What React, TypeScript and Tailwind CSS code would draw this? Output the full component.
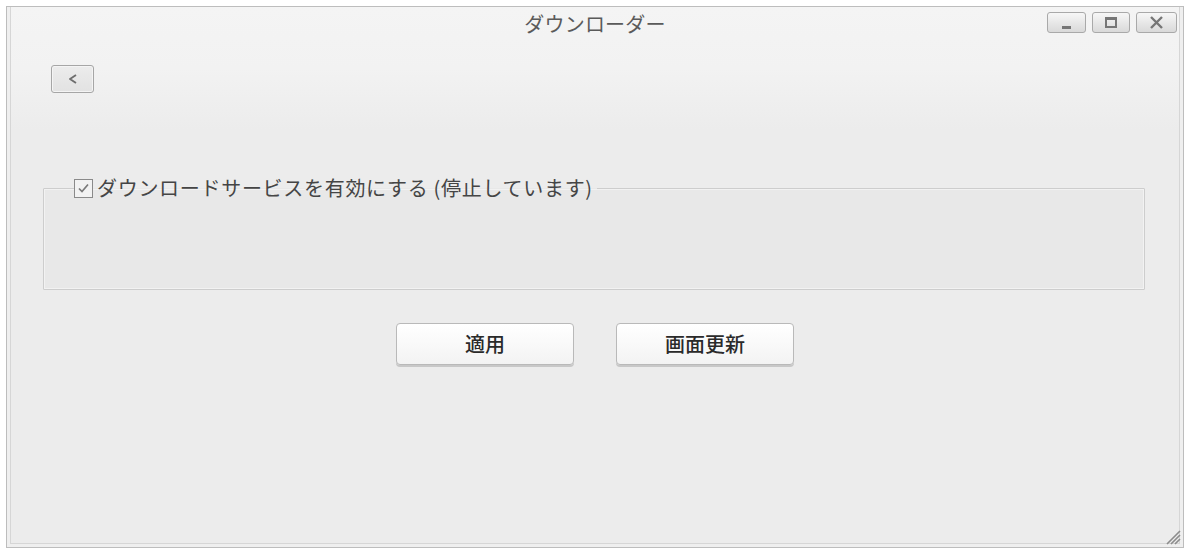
export default function App() {
  const jp = { fontFamily: '"Noto Sans CJK JP", "Noto Sans", sans-serif' };

  return (
    <div className="w-[1185px] h-[551px] bg-white pt-[6px] pl-[6px]" style={jp}>
      <div className="relative w-[1178px] h-[542px] border border-[#bdbdbd] bg-[#efefef] px-[3px] pb-[3px] flex flex-col">
        <div className="flex-1 flex flex-col border-x border-b border-[#d6d6d6] bg-[#ececec]">
          {/* header */}
          <div className="h-[123px] bg-gradient-to-b from-[#f4f4f4] via-[#f2f2f2] to-[#ececec]">
            <div className="grid grid-cols-[1fr_auto_1fr] items-start pt-[5px]">
              <div />
              <div className="text-[20px] leading-[22px] text-[#5a5a5a] mt-[1px] tracking-[0.2px]">
                ダウンローダー
              </div>
              <div className="flex justify-end gap-[6px] pr-[2px]">
                <WinButton w="w-[39px]">
                  <div className="w-[9px] h-[3px] bg-[#767676] mt-[9px]" />
                </WinButton>
                <WinButton w="w-[38px]">
                  <div className="w-[12px] h-[11px] border-[2px] border-[#767676] border-t-[3px]" />
                </WinButton>
                <WinButton w="w-[41px]">
                  <svg width="15" height="13" viewBox="0 0 15 13">
                    <path d="M2 1 L13 12 M13 1 L2 12" stroke="#767676" strokeWidth="2.4" fill="none" />
                  </svg>
                </WinButton>
              </div>
            </div>
            <div className="ml-[40px] mt-[30px]">
              <button className="w-[43px] h-[28px] rounded-[3px] border border-[#a6a6a6] bg-gradient-to-b from-[#ececec] to-[#e2e2e2] shadow-[inset_0_0_0_1px_#f4f4f4] flex items-center justify-center">
                <svg width="12" height="12" viewBox="0 0 12 12">
                  <path d="M9 2 L3 6 L9 10" stroke="#6e6e6e" strokeWidth="1.9" fill="none" strokeLinejoin="round" />
                </svg>
              </button>
            </div>
          </div>

          {/* body */}
          <div className="flex-1 flex flex-col pt-[46px]">
            <fieldset className="ml-[32px] mr-[34px] h-[114px] border border-[#cdcdcd] bg-[#e8e8e8] shadow-[inset_0_0_0_1px_#f2f2f2] rounded-[1px]">
              <legend className="ml-[30px] pr-[4px] flex items-center">
                <span className="w-[19px] h-[19px] border border-[#8a8a8a] bg-[#f2f2f2] flex items-center justify-center mr-[4px]">
                  <svg width="15" height="15" viewBox="0 0 15 15">
                    <path d="M3 7.5 L6 10.5 L12 3.5" stroke="#7a7a7a" strokeWidth="1.7" fill="none" />
                  </svg>
                </span>
                <span className="text-[20px] leading-[24px] text-[#454545] tracking-[0.7px]">
                  ダウンロードサービスを有効にする (停止しています)
                </span>
              </legend>
            </fieldset>

            <div className="flex justify-center gap-[42px] mt-[33px]">
              <ActionButton label="適用" />
              <ActionButton label="画面更新" />
            </div>
          </div>
        </div>

        {/* resize grip */}
        <svg className="absolute right-[2px] bottom-[2px]" width="20" height="20" viewBox="0 0 20 20">
          <path d="M19 6 L6 19 M19 10 L10 19 M19 14 L14 19" stroke="#8c8c8c" strokeWidth="1.6" fill="none" />
        </svg>
      </div>
    </div>
  );
}

function WinButton({ w, children }: { w: string; children: React.ReactNode }) {
  return (
    <div
      className={
        w +
        " h-[21px] rounded-[3px] border border-[#a9a9a9] bg-gradient-to-b from-[#f7f7f7] to-[#d9d9d9] flex items-center justify-center"
      }
    >
      {children}
    </div>
  );
}

function ActionButton({ label }: { label: string }) {
  return (
    <button className="w-[178px] h-[42px] rounded-[4px] border border-[#b9b9b9] bg-gradient-to-b from-[#ffffff] to-[#f3f3f3] shadow-[0_2px_0_#c8c8c8] text-[20px] font-medium text-[#2a2a2a] flex items-center justify-center">
      {label}
    </button>
  );
}
